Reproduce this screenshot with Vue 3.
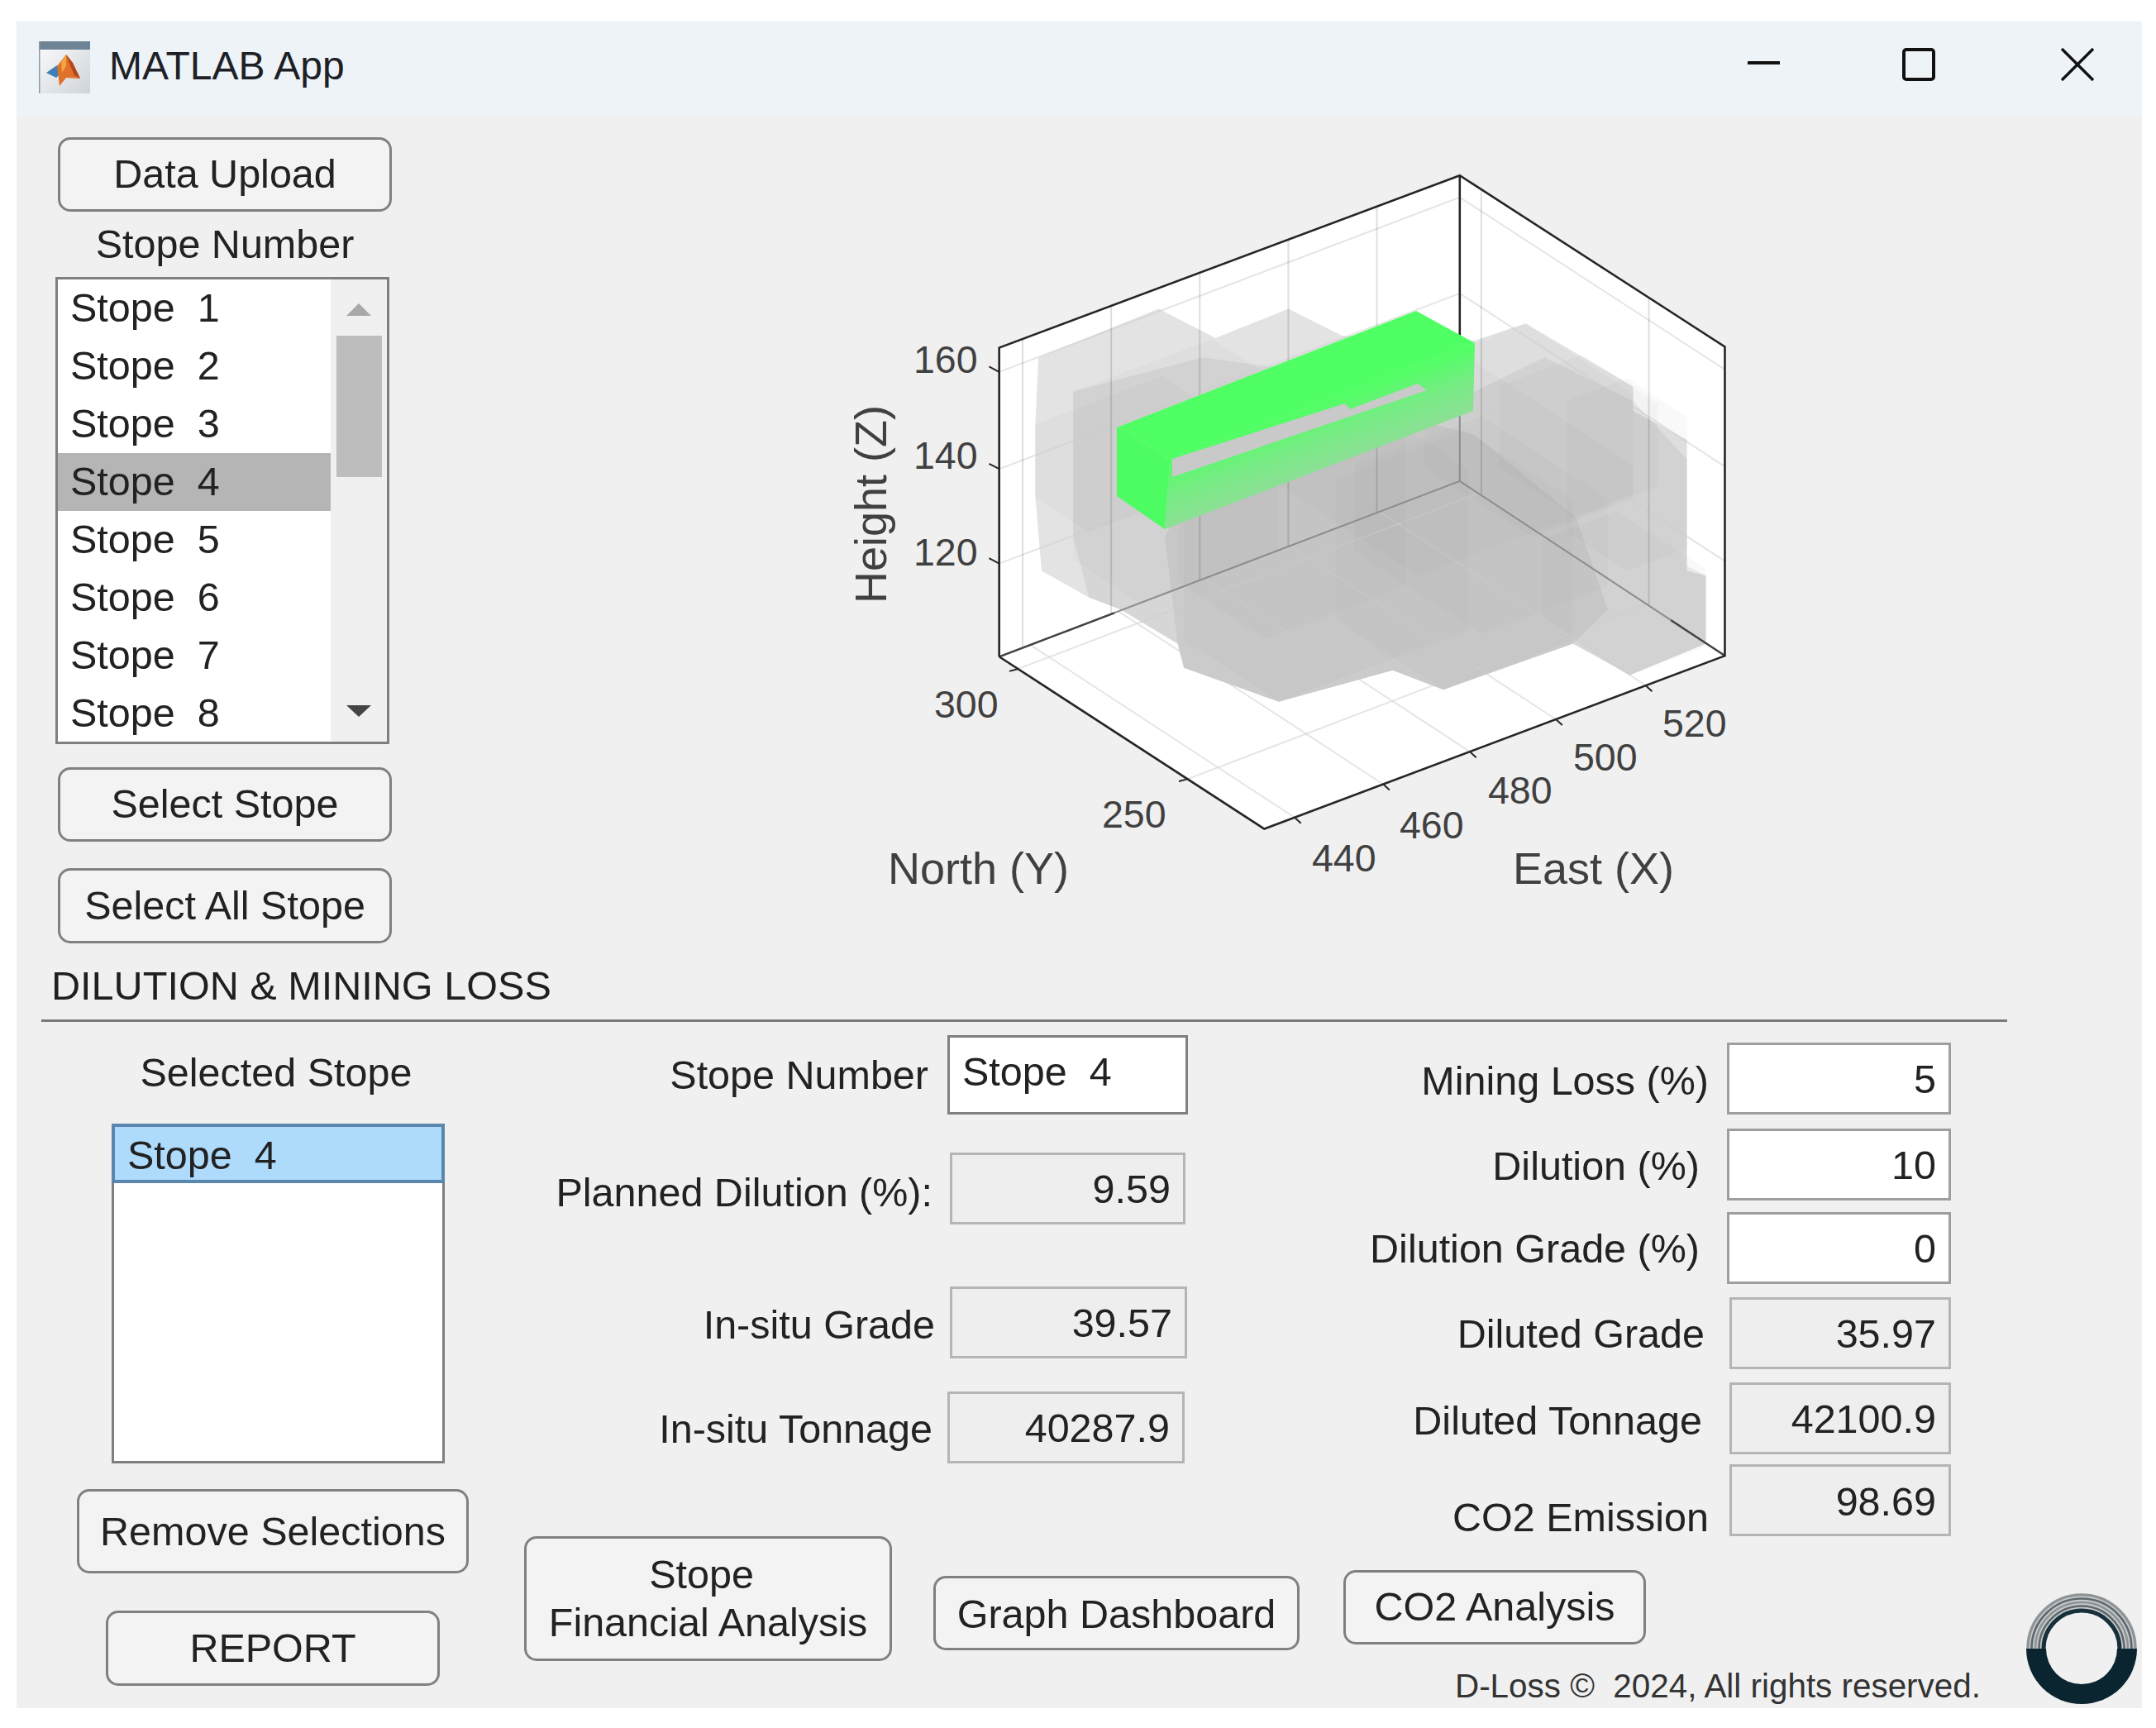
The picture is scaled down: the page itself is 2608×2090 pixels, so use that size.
<template>
  <div class="page">
    <div class="window">
      <header class="titlebar">
        <svg class="app-icon" width="62" height="63" viewBox="0 0 62 63">
          <defs>
            <linearGradient id="iconBody" x1="0" y1="0" x2="1" y2="1">
              <stop offset="0" stop-color="#fbfcfd" />
              <stop offset="1" stop-color="#cfd3d8" />
            </linearGradient>
          </defs>
          <rect x="0" y="0" width="62" height="63" fill="url(#iconBody)" />
          <rect x="0" y="0" width="62" height="10" fill="#6f8396" />
          <rect x="0" y="0" width="1.5" height="63" fill="#8c99a6" />
          <polygon points="9,38 22,29 30,35 21,44" fill="#3f7fb5" />
          <polygon points="33,16 22,30 25,54 33,44 50,45 41,26" fill="#e0712a" />
          <polygon points="33,16 41,26 50,45 43,41 37,27" fill="#b5451d" />
          <polygon points="33,16 27,25 28,38 33,30" fill="#f0a63c" />
        </svg>
        <span class="title-text">MATLAB App</span>
        <div class="win-controls">
          <svg class="ctl-min" width="39" height="4" viewBox="0 0 39 4"><rect width="39" height="4" fill="#111" /></svg>
          <svg class="ctl-max" width="40" height="40" viewBox="0 0 40 40"><rect x="2" y="2" width="36" height="36" rx="3" fill="none" stroke="#111" stroke-width="4" /></svg>
          <svg class="ctl-close" width="40" height="40" viewBox="0 0 40 40"><path d="M1 1 L39 39 M39 1 L1 39" fill="none" stroke="#111" stroke-width="3.4" /></svg>
        </div>
      </header>

      <section class="top">
        <div class="stope-col">
          <button class="btn">Data Upload</button>
          <div class="stope-label">Stope Number</div>
          <div class="listbox">
            <div class="rows">
              <div v-for="n in 8" :key="n" class="row" :class="{ picked: n === 4 }">{{ stopeName(n) }}</div>
            </div>
            <div class="scroll">
              <span class="arrow-up"></span>
              <span class="thumb"></span>
              <span class="arrow-down"></span>
            </div>
          </div>
          <button class="btn select-one">Select Stope</button>
          <button class="btn select-all">Select All Stope</button>
        </div>

        <svg class="plot" width="1200" height="920" viewBox="0 0 1200 920">
          <defs>
            <linearGradient id="frontFace" gradientUnits="userSpaceOnUse" x1="650" y1="306" x2="681" y2="386">
              <stop offset="0" stop-color="#4fff63" />
              <stop offset="0.45" stop-color="#76ec83" />
              <stop offset="1" stop-color="#92dc9a" />
            </linearGradient>
          </defs>
          <g transform="scale(0.7653 0.5867)">
            <polygon points="338,410 1066,55 1485,408 1485,1045 757,1402 338,1047" fill="#fff" />
            <line v-for="(l, i) in softLines" :key="'u' + i" :x1="l[0]" :y1="l[1]" :x2="l[2]" :y2="l[3]" class="gridline" />
            <polygon :points="silhouette" fill="#aaa" fill-opacity="0.33" />
            <polygon :points="midMass" fill="#9c9c9c" fill-opacity="0.17" />
            <polygon :points="coreMass" fill="#a0a0a0" fill-opacity="0.2" />
            <polygon v-for="(p, i) in boxes" :key="i" :points="p" fill="#8e8e8e" fill-opacity="0.055" />
            <line v-for="(l, i) in softLines" :key="'o' + i" :x1="l[0]" :y1="l[1]" :x2="l[2]" :y2="l[3]" class="gridline-pale" />
            <line v-for="(l, i) in wallLines" :key="'g' + i" :x1="l[0]" :y1="l[1]" :x2="l[2]" :y2="l[3]" class="gridline" />
            <line x1="338" y1="1047" x2="1066" y2="685" class="edge-soft" />
            <line x1="1066" y1="685" x2="1485" y2="1045" class="edge-soft" />
            <line x1="338" y1="1047" x2="520" y2="957" class="edge-mid" />
            <line x1="1400" y1="972" x2="1485" y2="1045" class="edge-mid" />
            <line x1="1066" y1="395" x2="1066" y2="685" class="edge-soft" />
            <line x1="1066" y1="55" x2="1066" y2="395" class="edge-hard" />
          </g>
          <polygon points="401,337 763,196 834,235 465,377" fill="#4fff63" />
          <polygon points="401,337 465,377 459,460 401,420" fill="#4dfb62" />
          <polygon points="465,377 834,235 832,317 459,460" fill="url(#frontFace)" />
          <polygon points="468,375 677,308 683,315 765,284 776,292 468,397" fill="#c9c9c9" />
          <g transform="scale(0.7653 0.5867)">
            <polyline points="338,1047 338,410 1066,55 1485,408 1485,1045 757,1402 338,1047" class="edge-hard" />
            <line v-for="(l, i) in ticks" :key="'t' + i" :x1="l[0]" :y1="l[1]" :x2="l[2]" :y2="l[3]" class="tick" />
          </g>
          <text v-for="t in tickLabels" :key="t.s" :x="t.x" :y="t.y" class="tick-text">{{ t.s }}</text>
          <text x="124" y="889" class="axis-text">North (Y)</text>
          <text x="880" y="889" class="axis-text">East (X)</text>
          <text transform="translate(122 430) rotate(-90)" class="axis-text z-label">Height (Z)</text>
        </svg>
      </section>

      <h2 class="heading">DILUTION &amp; MINING LOSS</h2>
      <div class="rule"></div>

      <section class="lower">
        <div class="selected-col">
          <div class="selected-label">Selected Stope</div>
          <div class="listbox2">
            <div class="row2">{{ stopeName(4) }}</div>
          </div>
          <button class="btn remove">Remove Selections</button>
          <button class="btn report">REPORT</button>
        </div>

        <div class="work">
          <div class="forms">
            <div class="form-mid">
              <div class="field"><label>Stope Number</label><div class="box text-box">{{ stopeName(4) }}</div></div>
              <div class="field"><label>Planned Dilution (%):</label><div class="box ro">9.59</div></div>
              <div class="field"><label>In-situ Grade</label><div class="box ro">39.57</div></div>
              <div class="field"><label>In-situ Tonnage</label><div class="box ro">40287.9</div></div>
            </div>
            <div class="form-right">
              <div class="field"><label>Mining Loss (%)</label><div class="box edit">5</div></div>
              <div class="field"><label>Dilution (%)</label><div class="box edit">10</div></div>
              <div class="field"><label>Dilution Grade (%)</label><div class="box edit">0</div></div>
              <div class="field"><label>Diluted Grade</label><div class="box ro">35.97</div></div>
              <div class="field"><label>Diluted Tonnage</label><div class="box ro">42100.9</div></div>
              <div class="field"><label>CO2 Emission</label><div class="box ro">98.69</div></div>
            </div>
          </div>

          <div class="foot">
            <div class="actions">
              <div class="action-row">
                <button class="btn financial"><span class="fin-first">Stope</span><span>Financial Analysis</span></button>
                <button class="btn graph">Graph Dashboard</button>
                <button class="btn co2">CO2 Analysis</button>
              </div>
              <div class="copyright">{{ copyright }}</div>
            </div>
            <svg class="logo" width="134" height="135" viewBox="-67 -67 134 135">
              <defs>
                <clipPath id="upperHalf"><rect x="-67" y="-67" width="134" height="67" /></clipPath>
              </defs>
              <g clip-path="url(#upperHalf)" fill="none">
                <circle r="56" stroke="#c6c9cb" stroke-width="22" />
                <circle r="65" stroke="#8d9295" stroke-width="3" />
                <circle r="60.5" stroke="#5f686d" stroke-width="2.6" />
                <circle r="56" stroke="#8d9295" stroke-width="2.6" />
                <circle r="51.5" stroke="#5f686d" stroke-width="2.6" />
                <circle r="46" stroke="#17303b" stroke-width="5" />
              </g>
              <path d="M-67 0 A67 67 0 0 0 67 0 L43 0 A43 43 0 0 1 -43 0 Z" fill="#0b2530" />
            </svg>
          </div>
        </div>
      </section>
    </div>
  </div>
</template>

<script setup>
const E = 0.4945
const N = 0.847

const stopeName = (n) => `Stope  ${n}`
const copyright = 'D-Loss ©  2024, All rights reserved.'

function hex(fx, fy, a, b, h) {
  const rx = fx + a
  const ry = fy - E * a
  const lx = fx - b
  const ly = fy - N * b
  const tx = fx + a - b
  const ty = fy - E * a - N * b - h
  return `${lx},${ly} ${fx},${fy} ${rx},${ry} ${rx},${ry - h} ${tx},${ty} ${lx},${ly - h}`
}

const silhouette =
  '400,430 590,330 680,390 795,330 880,385 1090,395 1170,360 1340,490 1340,540 1425,600 1425,870 1455,880 1455,1020 1335,1085 1245,1020 1040,1115 960,1075 780,1140 630,1070 620,1020 530,950 480,925 405,870 395,715 395,570'
const midMass =
  '455,500 660,430 880,470 1090,500 1200,430 1340,520 1425,640 1425,860 1455,880 1455,1020 1335,1085 1245,1020 1040,1115 960,1075 780,1140 630,1070 620,1020 530,950 480,925 455,800'
const coreMass =
  '620,1020 600,800 640,700 1000,560 1090,590 1250,760 1300,950 1245,1020 1040,1115 960,1075 780,1140 630,1070'

const boxes = [
  [560, 935, 220, 105, 345],
  [480, 790, 200, 85, 150],
  [780, 1140, 300, 150, 330],
  [1040, 1115, 205, 170, 290],
  [1000, 880, 340, 300, 60],
  [1180, 800, 160, 170, 217],
  [1330, 870, 95, 95, 270],
  [1335, 1085, 120, 140, 160],
  [1100, 1000, 200, 200, 180],
  [760, 1010, 220, 140, 300],
  [1250, 760, 130, 120, 170]
].map((b) => hex(...b))

const wallLines = []
for (const x of [375, 515, 655, 795, 935]) {
  wallLines.push([x, 410 - 0.4876 * (x - 338), x, 1047 - 0.4973 * (x - 338)])
}
for (const x of [1100, 1365]) {
  wallLines.push([x, 55 + 0.8425 * (x - 1066), x, 685 + 0.859 * (x - 1066)])
}
const softLines = []
for (const [left, mid, right] of [
  [460, 100, 455],
  [660, 298, 655],
  [855, 495, 850]
]) {
  softLines.push([338, left, 1066, mid], [1066, mid, 1485, right])
}
const eastTicks = [805, 945, 1082, 1218, 1360].map((x) => [x, 1402 - 0.49 * (x - 757)])
for (const [x, y] of eastTicks) softLines.push([x, y, x - 419, y - 357])
const northTicks = [
  [368, 1072],
  [636, 1299]
]
for (const [x, y] of northTicks) softLines.push([x, y, x + 728, y - 362])

const ticks = [
  ...eastTicks.map(([x, y]) => [x, y, x + 10, y + 12]),
  ...northTicks.map(([x, y]) => [x, y, x - 14, y + 5]),
  ...[460, 660, 855].map((y) => [338, y, 322, y - 11])
]

const tickLabels = [
  { s: '160', x: 155, y: 271 },
  { s: '140', x: 155, y: 387 },
  { s: '120', x: 155, y: 504 },
  { s: '300', x: 180, y: 688 },
  { s: '250', x: 383, y: 821 },
  { s: '440', x: 637, y: 874 },
  { s: '460', x: 743, y: 834 },
  { s: '480', x: 850, y: 792 },
  { s: '500', x: 953, y: 752 },
  { s: '520', x: 1061, y: 711 }
]
</script>

<style>
html,
body {
  margin: 0;
  background: #fff;
}
</style>

<style scoped>
.page {
  width: 2608px;
  height: 2090px;
  box-sizing: border-box;
  padding: 26px 17px 24px 20px;
  background: #fff;
  font-family: "Liberation Sans", Arial, sans-serif;
  font-size: 48.5px;
  color: #222;
  overflow: hidden;
}
.window {
  height: 2040px;
  background: #f0f0f0;
  display: flex;
  flex-direction: column;
  overflow: hidden;
}
.titlebar {
  height: 116px;
  flex: none;
  background: #eef3f8;
  display: flex;
  align-items: center;
  padding-left: 27px;
}
.app-icon {
  margin-top: -6px;
}
.title-text {
  margin-left: 23px;
  margin-top: -10px;
  font-size: 48px;
  color: #1d2126;
}
.win-controls {
  margin-left: auto;
  display: flex;
  align-items: flex-start;
  padding-right: 58px;
  height: 100%;
  padding-top: 32px;
  box-sizing: border-box;
}
.ctl-min {
  margin-top: 16px;
  margin-right: -2px;
}
.ctl-max {
  margin-left: 150px;
}
.ctl-close {
  margin-left: 152px;
}

.btn {
  display: block;
  box-sizing: border-box;
  padding: 0 0 2px;
  border: 3px solid #808080;
  border-radius: 15px;
  background: #f3f3f3;
  font: inherit;
  color: #222;
  white-space: nowrap;
}

.top {
  height: 999px;
  flex: none;
  display: flex;
  align-items: flex-start;
}
.stope-col {
  width: 404px;
  margin-left: 50px;
  padding-top: 24px;
  flex: none;
}
.stope-col .btn {
  width: 404px;
  height: 90px;
}
.stope-label {
  height: 79px;
  line-height: 78px;
  text-align: center;
}
.listbox {
  width: 404px;
  height: 565px;
  margin-left: -3px;
  box-sizing: border-box;
  border: 3px solid #7f7f7f;
  background: #fff;
  display: flex;
}
.rows {
  width: 330px;
  flex: none;
}
.row {
  height: 70px;
  line-height: 69px;
  padding-left: 15px;
  white-space: pre;
}
.row.picked {
  background: #b5b5b5;
}
.scroll {
  flex: 1;
  background: #f0f0f0;
  display: flex;
  flex-direction: column;
  align-items: center;
  padding-top: 29px;
}
.arrow-up {
  width: 0;
  height: 0;
  border-left: 15px solid transparent;
  border-right: 15px solid transparent;
  border-bottom: 15px solid #a8a8a8;
}
.thumb {
  width: 55px;
  height: 171px;
  margin-top: 24px;
  background: #bdbdbd;
}
.arrow-down {
  width: 0;
  height: 0;
  margin-top: 276px;
  border-left: 15px solid transparent;
  border-right: 15px solid transparent;
  border-top: 14px solid #444;
}
.stope-col .select-one {
  margin-top: 28px;
}
.stope-col .select-all {
  height: 91px;
  margin-top: 32px;
}
.plot {
  flex: none;
  margin-left: 476px;
  margin-top: 38px;
}
.gridline {
  stroke: rgba(0, 0, 0, 0.13);
  stroke-width: 2;
  vector-effect: non-scaling-stroke;
}
.gridline-pale {
  stroke: rgba(255, 255, 255, 0.24);
  stroke-width: 2;
  vector-effect: non-scaling-stroke;
}
.edge-soft {
  stroke: #8c8c8c;
  stroke-width: 2;
  vector-effect: non-scaling-stroke;
}
.edge-mid {
  stroke: #444;
  stroke-width: 2.4;
  vector-effect: non-scaling-stroke;
}
.edge-hard {
  fill: none;
  stroke: #262626;
  stroke-width: 2.6;
  vector-effect: non-scaling-stroke;
}
.tick {
  stroke: #262626;
  stroke-width: 2;
  vector-effect: non-scaling-stroke;
}
.tick-text {
  font-size: 46.5px;
  fill: #404040;
}
.axis-text {
  font-size: 54px;
  fill: #404040;
}
.z-label {
  text-anchor: middle;
}

.heading {
  flex: none;
  margin: 0;
  height: 92px;
  line-height: 102px;
  padding-left: 42px;
  font-size: 48.6px;
  font-weight: 400;
  color: #1f1f1f;
}
.rule {
  flex: none;
  width: 2378px;
  height: 3px;
  margin-left: 30px;
  background: #7a7a7a;
}

.lower {
  flex: 1;
  display: flex;
  padding-left: 73px;
}
.selected-col {
  width: 474px;
  flex: none;
}
.selected-label {
  height: 123px;
  line-height: 122px;
  text-align: center;
  padding-left: 8px;
  box-sizing: border-box;
}
.listbox2 {
  width: 403px;
  height: 411px;
  margin-left: 42px;
  box-sizing: border-box;
  border: 3px solid #7f7f7f;
  background: #fff;
}
.row2 {
  height: 72px;
  margin: -3px -3px 0;
  box-sizing: border-box;
  border: 4px solid #5b86ad;
  background: #aedafc;
  line-height: 68px;
  padding-left: 15px;
  white-space: pre;
}
.selected-col .remove {
  width: 474px;
  height: 102px;
  margin-top: 31px;
  padding: 0;
}
.selected-col .report {
  width: 404px;
  height: 91px;
  margin-top: 45px;
  margin-left: 35px;
}

.work {
  flex: 1;
  min-width: 0;
}
.forms {
  height: 622px;
  display: flex;
}
.form-mid {
  width: 870px;
  flex: none;
  padding-top: 16px;
}
.form-right {
  width: 923px;
  flex: none;
  padding-top: 25px;
}
.field {
  display: flex;
  justify-content: flex-end;
  align-items: center;
}
.field label {
  white-space: pre;
}
.box {
  box-sizing: border-box;
  display: flex;
  align-items: center;
  justify-content: flex-end;
  height: 87px;
  padding-right: 15px;
}
.text-box {
  justify-content: flex-start;
  width: 291px;
  height: 96px;
  padding: 0 0 8px 15px;
  background: #fff;
  border: 3px solid #808080;
  white-space: pre;
}
.edit {
  width: 271px;
  background: #fff;
  border: 3px solid #9e9e9e;
}
.ro {
  background: #eeeeee;
  border: 3px solid #b5b5b5;
}

.form-mid .field:nth-child(1) { gap: 23px; }
.form-mid .field:nth-child(2) {
  gap: 21px;
  margin-top: 46px;
  margin-right: 3px;
}
.form-mid .field:nth-child(2) label { margin-top: 9px; }
.form-mid .field:nth-child(2) .box { width: 285px; }
.form-mid .field:nth-child(3) {
  gap: 18px;
  margin-top: 75px;
  margin-right: 1px;
}
.form-mid .field:nth-child(3) label { margin-top: 4px; }
.form-mid .field:nth-child(3) .box { width: 287px; }
.form-mid .field:nth-child(4) {
  gap: 18px;
  margin-top: 40px;
  margin-right: 4px;
}
.form-mid .field:nth-child(4) label { margin-top: 2px; }
.form-mid .field:nth-child(4) .box { width: 287px; }

.form-right .field:nth-child(1) { gap: 22px; }
.form-right .field:nth-child(1) label { margin-top: 5px; }
.form-right .field:nth-child(2) {
  gap: 33px;
  margin-top: 17px;
}
.form-right .field:nth-child(2) label { margin-top: 3px; }
.form-right .field:nth-child(3) {
  gap: 33px;
  margin-top: 14px;
}
.form-right .field:nth-child(4) {
  gap: 30px;
  margin-top: 16px;
}
.form-right .field:nth-child(4) .box { width: 268px; }
.form-right .field:nth-child(5) {
  gap: 33px;
  margin-top: 16px;
}
.form-right .field:nth-child(5) .box { width: 268px; }
.form-right .field:nth-child(5) label { margin-top: 5px; }
.form-right .field:nth-child(6) {
  gap: 25px;
  margin-top: 12px;
}
.form-right .field:nth-child(6) .box {
  width: 268px;
  padding-top: 3px;
}
.form-right .field:nth-child(6) label {
  align-self: flex-end;
  margin-bottom: -5px;
}

.foot {
  display: flex;
  align-items: flex-start;
}
.actions {
  width: 1884px;
  flex: none;
}
.action-row {
  display: flex;
  align-items: flex-start;
  height: 151px;
  padding-left: 67px;
}
.action-row .financial {
  width: 445px;
  height: 151px;
  line-height: 58px;
  flex: none;
}
.financial span {
  display: block;
}
.financial .fin-first {
  margin-right: 16px;
}
.action-row .graph {
  width: 443px;
  height: 90px;
  margin-left: 50px;
  margin-top: 48px;
  padding: 2px 0 0;
  flex: none;
}
.action-row .co2 {
  width: 366px;
  height: 90px;
  margin-left: 53px;
  margin-top: 41px;
  flex: none;
}
.copyright {
  margin-top: 7px;
  padding-left: 1193px;
  height: 46px;
  line-height: 46px;
  font-size: 40.4px;
  white-space: pre;
  color: #333;
}
.logo {
  flex: none;
  margin-top: 69px;
}
</style>
